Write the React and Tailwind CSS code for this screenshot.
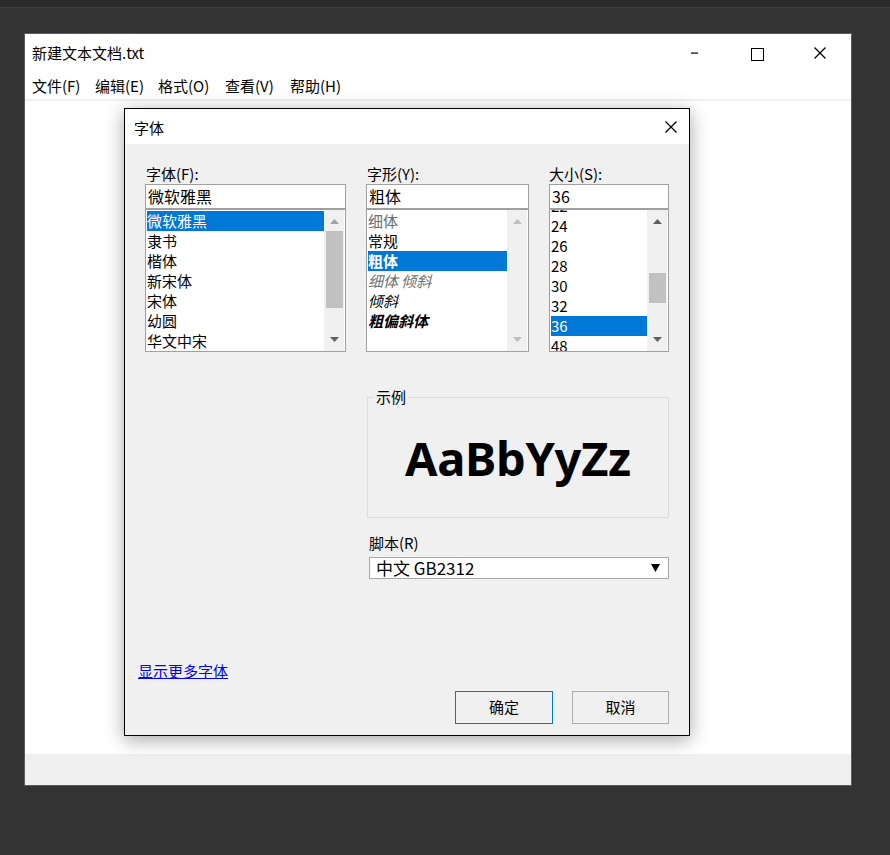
function Tri({ dir, color }) {
  return (
    <svg width="9" height="5" viewBox="0 0 9 5">
      <polygon points={dir === "up" ? "0,5 4.5,0 9,5" : "0,0 9,0 4.5,5"} fill={color} />
    </svg>
  );
}

function ScrollBar({ upColor, downColor, thumb }) {
  return (
    <div className="w-[20px] h-full flex flex-col bg-[#f0f0f0]">
      <div className="h-[21px] flex items-center justify-center pt-[2px]">
        <Tri dir="up" color={upColor} />
      </div>
      <div className="flex-1 pl-[2px] pr-[1px]">
        {thumb ? <div className={thumb} /> : null}
      </div>
      <div className="h-[21px] flex items-center justify-center pb-[2px]">
        <Tri dir="down" color={downColor} />
      </div>
    </div>
  );
}

function Row({ children, sel, cls = "" }) {
  return (
    <div
      className={
        "h-[20px] leading-[20px] text-[15px] whitespace-nowrap " +
        (sel ? "bg-[#0078d7] text-white " : "") +
        cls
      }
    >
      {children}
    </div>
  );
}

function Column({ label, value, width, pl, children, scroll }) {
  return (
    <div className={"flex flex-col " + width}>
      <div className={"h-[20px] leading-[20px] text-[15px] " + pl}>{label}</div>
      <div className="h-[25px] border border-[#a0a0a0] bg-white pl-[2px] text-[16px] leading-[23px]">
        {value}
      </div>
      <div className="h-[143px] border border-[#a0a0a0] bg-white flex pr-px">
        <div className="flex-1 pl-px pt-px overflow-hidden">{children}</div>
        {scroll}
      </div>
    </div>
  );
}

function XIcon({ size, stroke = 1 }) {
  return (
    <svg width={size} height={size} viewBox={`0 0 ${size} ${size}`}>
      <line x1="0.5" y1="0.5" x2={size - 0.5} y2={size - 0.5} stroke="#000" strokeWidth={stroke} />
      <line x1={size - 0.5} y1="0.5" x2="0.5" y2={size - 0.5} stroke="#000" strokeWidth={stroke} />
    </svg>
  );
}

function Dialog() {
  return (
    <div className="absolute left-[124px] top-[108px] w-[566px] h-[628px] border border-black bg-[#f0f0f0] flex flex-col shadow-[0_4px_18px_rgba(0,0,0,0.35)]">
      <div className="h-[35px] bg-white flex items-center pl-[9px] pr-[12px]">
        <span className="flex-1 text-[15px] leading-[20px] pt-[3px]">字体</span>
        <XIcon size={12} stroke={1.3} />
      </div>
      <div className="flex-1 flex flex-col px-[20px] pt-[20px] pb-[11px]">
        <div className="flex gap-[20px]">
          <Column
            label="字体(F):"
            value="微软雅黑"
            width="w-[201px]"
            pl="pl-px"
            scroll={<ScrollBar upColor="#a3a3a3" downColor="#606060" thumb="h-[77px] bg-[#c1c1c1]" />}
          >
            <Row sel>微软雅黑</Row>
            <Row>隶书</Row>
            <Row>楷体</Row>
            <Row>新宋体</Row>
            <Row>宋体</Row>
            <Row>幼圆</Row>
            <Row>华文中宋</Row>
          </Column>
          <Column
            label="字形(Y):"
            value="粗体"
            width="w-[163px]"
            pl="pl-px"
            scroll={<ScrollBar upColor="#bfbfbf" downColor="#bfbfbf" />}
          >
            <Row cls="text-[#6e6e6e]">细体</Row>
            <Row>常规</Row>
            <Row sel cls="font-bold">粗体</Row>
            <Row cls="italic text-[#6e6e6e]">细体 倾斜</Row>
            <Row cls="italic">倾斜</Row>
            <Row cls="italic font-bold">粗偏斜体</Row>
          </Column>
          <Column
            label="大小(S):"
            value="36"
            width="w-[120px]"
            pl="pl-0"
            scroll={<ScrollBar upColor="#606060" downColor="#606060" thumb="mt-[42px] h-[30px] bg-[#c1c1c1]" />}
          >
            <div className="-mt-[15px]">
              <Row>22</Row>
              <Row>24</Row>
              <Row>26</Row>
              <Row>28</Row>
              <Row>30</Row>
              <Row>32</Row>
              <Row sel>36</Row>
              <Row>48</Row>
            </div>
          </Column>
        </div>

        <div className="flex">
          <div className="w-[221px]" />
          <div className="w-[303px] flex flex-col">
            <div className="mt-[45px] ml-px w-[302px] h-[121px] border border-[#dcdcdc] flex flex-col">
              <div className="-mt-[11px] -mb-[9px] ml-[6px] px-[2px] w-fit bg-[#f0f0f0] text-[15px] leading-[20px]">
                示例
              </div>
              <div className="flex-1 flex items-center justify-center pt-[2px]">
                <span className="font-['Noto_Sans',sans-serif] font-bold text-[47px] leading-none tracking-[-0.3px]">
                  AaBbYyZz
                </span>
              </div>
            </div>
            <div className="mt-[15px] pl-[3px] h-[20px] leading-[20px] text-[15px]">脚本(R)</div>
            <div className="mt-[4px] ml-[3px] w-[300px] h-[22px] border border-[#a8a8a8] bg-white flex items-center pl-[6px] pr-[8px]">
              <span className="flex-1 text-[17px] leading-[20px]">中文 GB2312</span>
              <svg width="9" height="8" viewBox="0 0 9 8">
                <polygon points="0,0 9,0 4.5,8" fill="#000" />
              </svg>
            </div>
          </div>
        </div>

        <div className="flex-1" />
        <div className="h-[20px] -ml-[7px] leading-[20px] text-[15px]">
          <span className="text-[#0000ff] underline">显示更多字体</span>
        </div>
        <div className="mt-[10px] flex justify-end gap-[19px]">
          <div className="w-[98px] h-[33px] border border-[#0078d7] flex items-center justify-center text-[15px]">
            确定
          </div>
          <div className="w-[97px] h-[33px] border border-[#adadad] flex items-center justify-center text-[15px]">
            取消
          </div>
        </div>
      </div>
    </div>
  );
}

export default function App() {
  return (
    <div className="relative w-[890px] h-[855px] bg-[#333333] overflow-hidden font-['Noto_Sans_CJK_SC',sans-serif] text-black">
      <div className="h-[8px] bg-[#2b2b2b] border-b border-[#3d3d3d]" />
      <div className="ml-[24px] mt-[25px] w-[828px] h-[753px] border border-[#5c5c5c] bg-white flex flex-col">
        <div className="h-[38px] flex items-center">
          <div className="pl-[7px] flex-1 text-[15px] leading-[20px]">新建文本文档.txt</div>
          <div className="w-[62px] h-full flex items-center justify-center">
            <svg width="8" height="2" viewBox="0 0 8 2">
              <rect x="0" y="0.5" width="7" height="1.2" fill="#000" />
            </svg>
          </div>
          <div className="w-[62px] h-full flex items-center justify-center pt-[3px]">
            <svg width="13" height="13" viewBox="0 0 13 13">
              <rect x="0.5" y="0.5" width="12" height="12" fill="none" stroke="#000" strokeWidth="1" />
            </svg>
          </div>
          <div className="w-[63px] h-full flex items-center justify-center">
            <XIcon size={12} stroke={1.2} />
          </div>
        </div>
        <div className="h-[27px] flex items-center pl-[7px] text-[15px] leading-[20px]">
          <span className="w-[63px]">文件(F)</span>
          <span className="w-[63px]">编辑(E)</span>
          <span className="w-[67px]">格式(O)</span>
          <span className="w-[65px]">查看(V)</span>
          <span>帮助(H)</span>
        </div>
        <div className="h-[2px] bg-[#f0f0f0]" />
        <div className="flex-1 bg-white" />
        <div className="h-[31px] bg-[#f0f0f0]" />
      </div>
      <Dialog />
    </div>
  );
}
